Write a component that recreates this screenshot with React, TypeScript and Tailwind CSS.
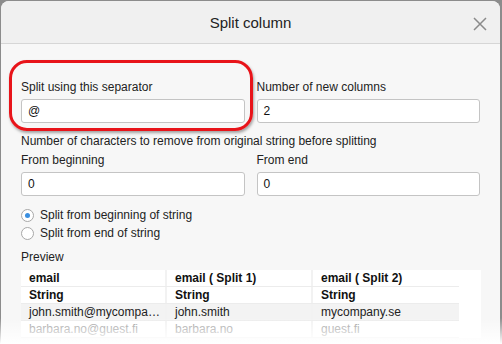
import React from "react";

const font = { fontFamily: '"Liberation Sans", Arial, sans-serif' };

function Field({ label, value }: { label: string; value: string }) {
  return (
    <div className="flex flex-col">
      <div className="h-[17px] text-[12px] leading-[17px] text-[#222]">{label}</div>
      <div className="mt-[3px] flex h-[24px] items-center rounded-[3px] border border-[#c4c4c4] bg-white px-[6px] text-[12px] text-[#111]">
        {value}
      </div>
    </div>
  );
}

function Radio({ checked, label }: { checked?: boolean; label: string }) {
  return (
    <div className="flex h-[18px] items-center gap-[6px]">
      <span className="flex h-[13px] w-[13px] items-center justify-center rounded-full border border-[#a8a8a8] bg-white">
        {checked && <span className="h-[5px] w-[5px] rounded-full bg-[#3b8fe0]" />}
      </span>
      <span className="text-[12px] text-[#222]">{label}</span>
    </div>
  );
}

const rows = [
  { cells: ["email", "email ( Split 1)", "email ( Split 2)"], cls: "font-bold text-[#111] bg-white" },
  { cells: ["String", "String", "String"], cls: "font-bold text-[#111] bg-white" },
  { cells: ["john.smith@mycompan…", "john.smith", "mycompany.se"], cls: "text-[#222] bg-[#f3f3f3]" },
  { cells: ["barbara.no@guest.fi", "barbara.no", "guest.fi"], cls: "text-[#999] bg-white" },
];

export default function App() {
  return (
    <div className="relative h-[344px] w-[502px] overflow-hidden bg-[#8c8c8c]" style={font}>
      <div className="ml-px mr-[2px] mt-px h-[343px] overflow-hidden rounded-t-[8px] bg-[#f7f7f7]">
        {/* Header */}
        <div className="relative flex h-[43px] items-center justify-center border-b border-[#d6d6d6] bg-[#f0f0f0] pt-[3px]">
          <span className="text-[15px] text-[#222]">Split column</span>
          <svg className="absolute right-[13px] top-[16px]" width="14" height="14" viewBox="0 0 14 14">
            <path d="M1 1L13 13M13 1L1 13" stroke="#8a8a8a" strokeWidth="1.5" />
          </svg>
        </div>

        {/* Body */}
        <div className="px-[20px] pt-[35px]">
          <div className="relative grid grid-cols-2 gap-[12px]">
            <div className="pointer-events-none absolute left-[-12px] top-[-19px] h-[71px] w-[244px] rounded-[18px] border-[3px] border-[#e8141a] shadow-[1px_2px_3px_rgba(0,0,0,0.35)]" />
            <Field label="Split using this separator" value="@" />
            <Field label="Number of new columns" value="2" />
          </div>

          <div className="mt-[10px] h-[17px] text-[12px] leading-[17px] text-[#222]">
            Number of characters to remove from original string before splitting
          </div>
          <div className="mt-[2px] grid grid-cols-2 gap-[12px]">
            <Field label="From beginning" value="0" />
            <Field label="From end" value="0" />
          </div>

          <div className="mt-[10px] flex flex-col">
            <Radio checked label="Split from beginning of string" />
            <Radio label="Split from end of string" />
          </div>

          <div className="mt-[7px] h-[17px] text-[12px] leading-[17px] text-[#222]">Preview</div>
          <div className="mt-[4px] mr-[-1px] bg-white pr-[22px]">
            {rows.map((r, i) => (
              <div key={i} className={`grid h-[17px] grid-cols-3 border-b border-[#ececec] text-[12px] leading-[17px] ${r.cls}`}>
                {r.cells.map((c, j) => (
                  <div key={j} className={`truncate pl-[8px] ${j < 2 ? "border-r-2 border-[#f2f2f2]" : ""}`}>
                    {c}
                  </div>
                ))}
              </div>
            ))}
          </div>
        </div>
      </div>
      <div className="pointer-events-none absolute bottom-0 left-0 right-0 h-[26px] bg-gradient-to-b from-transparent to-white" />
    </div>
  );
}
